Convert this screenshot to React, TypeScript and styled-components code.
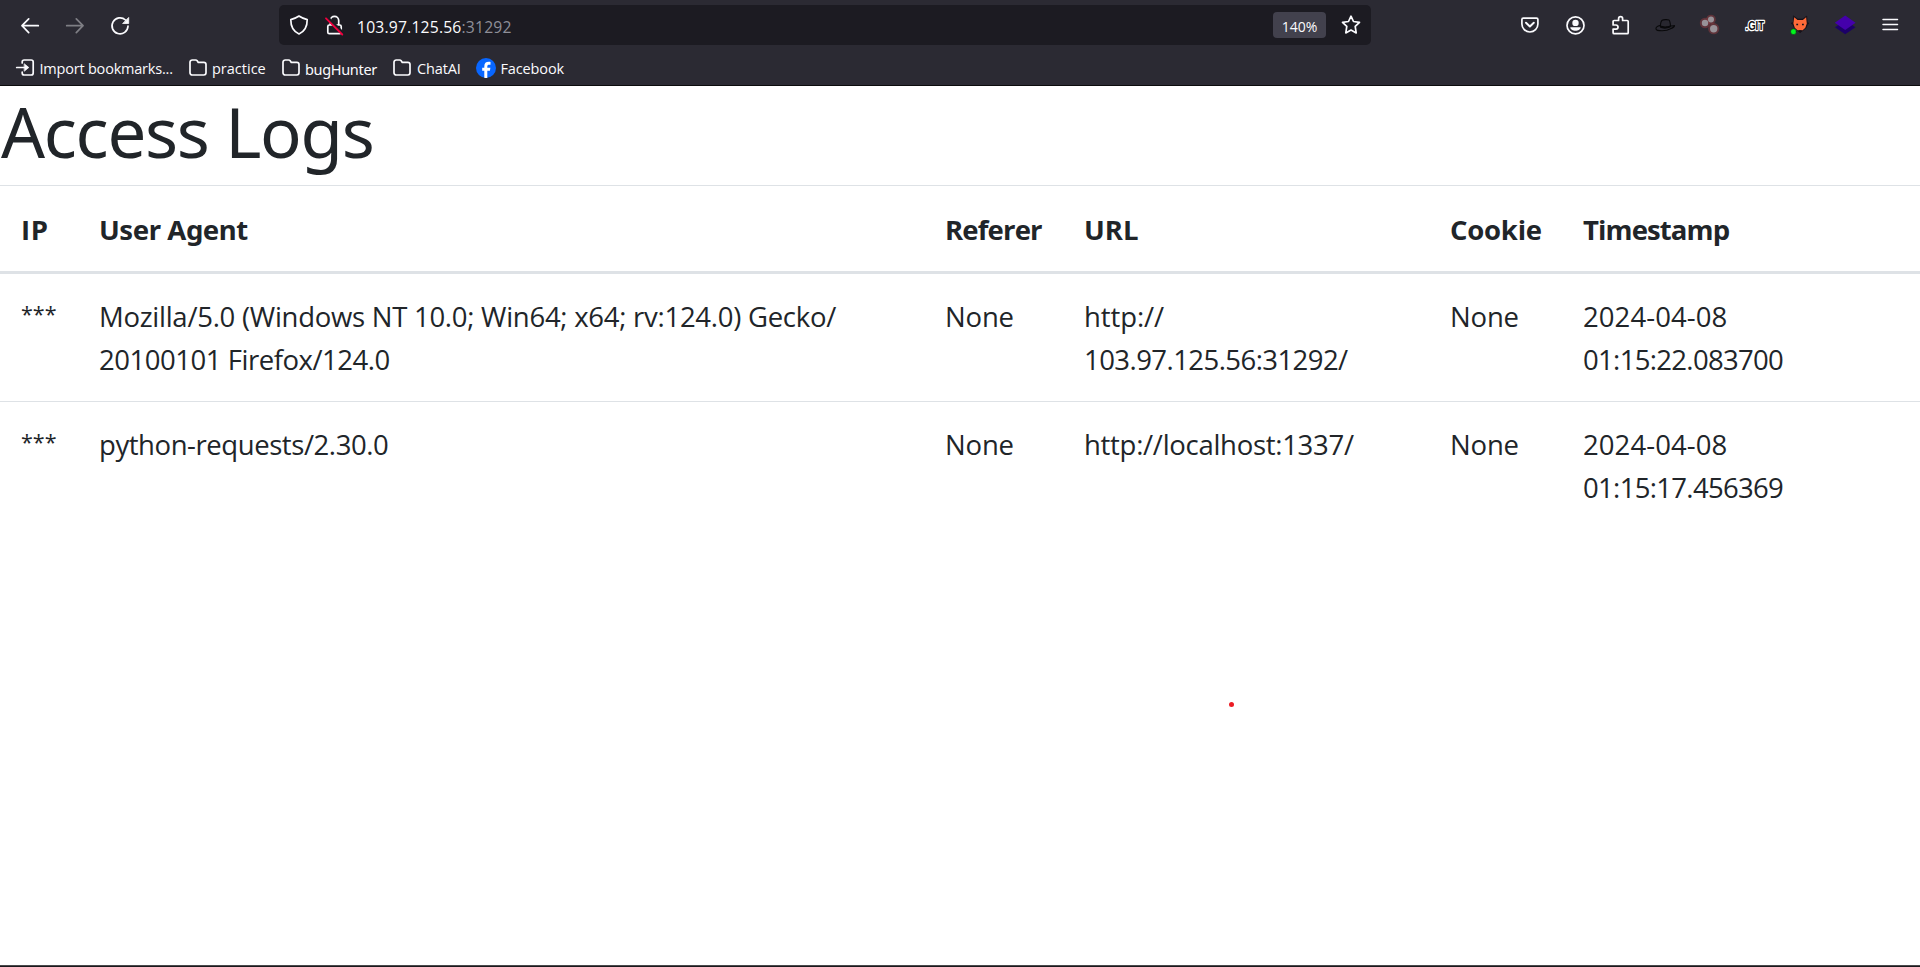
import React from 'react';
import styled, { createGlobalStyle } from 'styled-components';

const GlobalStyle = createGlobalStyle`
  * { box-sizing: border-box; }
  html, body { margin: 0; padding: 0; background: #fff; }
  body {
    font-family: 'Open Sans', 'Noto Sans', sans-serif;
    overflow: hidden;
  }
`;

const roundFont = "'Noto Sans', 'Open Sans', sans-serif";

const Window = styled.div`
  display: flex;
  flex-direction: column;
  width: 100%;
  height: 967px;
`;

const Chrome = styled.header`
  flex: none;
  height: 86px;
  background: #2b2a33;
  border-bottom: 1px solid #0c0c0d;
  color: #fbfbfe;
`;

const NavBar = styled.div`
  display: flex;
  align-items: center;
  height: 50px;
`;

const NavButtons = styled.div`
  display: flex;
  width: 279px;
  padding-left: 7.5px;
`;

const IconButton = styled.span<{ $dim?: boolean }>`
  display: flex;
  justify-content: center;
  width: 45px;
  opacity: ${(p) => (p.$dim ? 0.4 : 1)};
`;

const Glyph = styled.svg`
  display: block;
  flex: none;
  width: 24px;
  height: 24px;
  overflow: visible;
  fill: none;
  stroke: #fbfbfe;
  stroke-width: 1.7;
  stroke-linecap: round;
  stroke-linejoin: round;
`;

const UrlBar = styled.div`
  display: flex;
  align-items: center;
  width: 1092px;
  height: 40px;
  padding: 0 8px;
  border-radius: 5px;
  background: #1c1b22;
`;

const Security = styled.div`
  display: flex;
  gap: 11px;
`;

const Address = styled.div`
  flex: 1;
  margin-left: 11px;
  padding-top: 4px;
  font-size: 15.7px;
  line-height: 24px;
  letter-spacing: 0.19px;
  white-space: nowrap;
`;

const Port = styled.span`
  color: #8f8f98;
`;

const ZoomBadge = styled.span`
  display: flex;
  align-items: center;
  justify-content: center;
  width: 53px;
  height: 26px;
  margin-right: 13px;
  padding-top: 2px;
  border-radius: 4px;
  background: #42414d;
  font-size: 14px;
`;

const Extensions = styled.div`
  display: flex;
  margin-left: auto;
  padding-right: 7.5px;
`;

const GitText = styled.text`
  font: 700 12px 'Liberation Sans', sans-serif;
  fill: #111;
  stroke: #fff;
  stroke-width: 2.6px;
  paint-order: stroke;
`;

const Bookmarks = styled.nav`
  display: flex;
  align-items: center;
  height: 35px;
  padding-left: 15px;
`;

const Bookmark = styled.span<{ $width: number; $gap?: number; $spacing?: number; $round?: boolean }>`
  display: flex;
  align-items: center;
  gap: ${(p) => p.$gap ?? 4}px;
  width: ${(p) => p.$width}px;
  font-family: ${(p) => (p.$round ? roundFont : 'inherit')};
  font-size: 14.5px;
  line-height: 20px;
  letter-spacing: ${(p) => p.$spacing ?? -0.2}px;
  white-space: nowrap;
`;

const BookmarkLabel = styled.span`
  padding-top: 2px;
`;

const BookmarkGlyph = styled(Glyph)`
  width: 20px;
  height: 20px;
`;

const Page = styled.main`
  flex: 1;
  color: #212529;
`;

const Title = styled.h1`
  height: 99px;
  margin: 0;
  padding: 3px 0 0 1px;
  font-family: ${roundFont};
  font-size: 69px;
  font-weight: 400;
  line-height: 84px;
  letter-spacing: -1.3px;
`;

const LogTable = styled.table`
  width: 100%;
  table-layout: fixed;
  border-collapse: separate;
  border-spacing: 0;
  font-size: 27.5px;
  line-height: 43px;
  text-align: left;
`;

const Column = styled.col<{ $width?: number }>`
  width: ${(p) => (p.$width ? `${p.$width}px` : 'auto')};
`;

const HeadCell = styled.th<{ $spacing: number; $round: boolean }>`
  height: 89px;
  padding: 22px 0 20px 21px;
  border-top: 1px solid #dee2e6;
  border-bottom: 3px solid #dee2e6;
  font-family: ${(p) => (p.$round ? roundFont : 'inherit')};
  font-weight: 700;
  letter-spacing: ${(p) => p.$spacing}px;
  white-space: nowrap;
`;

const Cell = styled.td`
  padding: 21px 0 20px 21px;
  vertical-align: top;
  white-space: nowrap;

  tr + tr > & {
    border-top: 1px solid #dee2e6;
  }
`;

const MaskedCell = styled(Cell)`
  padding-top: 18px;
  font-size: 21.5px;
`;

const Line = styled.div<{ $spacing: number }>`
  letter-spacing: ${(p) => p.$spacing}px;
`;

const PointerDot = styled.span`
  position: absolute;
  left: 1229px;
  top: 702px;
  width: 5px;
  height: 5px;
  border-radius: 50%;
  background: #ec1c24;
`;

const BottomEdge = styled.footer`
  flex: none;
  height: 2px;
  border-top: 1px solid #4a4a4c;
  background: #1b191c;
`;

type TextLine = [text: string, spacing: number];

const headings: { text: string; spacing: number; round?: boolean }[] = [
  { text: 'IP', spacing: 0.6 },
  { text: 'User Agent', spacing: -0.43, round: true },
  { text: 'Referer', spacing: -0.82 },
  { text: 'URL', spacing: 0.03 },
  { text: 'Cookie', spacing: -0.25 },
  { text: 'Timestamp', spacing: -0.89 },
];

const none: TextLine[] = [['None', -0.17]];

const logs: { ip: string; cells: TextLine[][] }[] = [
  {
    ip: '***',
    cells: [
      [
        ['Mozilla/5.0 (Windows NT 10.0; Win64; x64; rv:124.0) Gecko/', -0.27],
        ['20100101 Firefox/124.0', -0.47],
      ],
      none,
      [
        ['http://', -0.1],
        ['103.97.125.56:31292/', -0.56],
      ],
      none,
      [
        ['2024-04-08', 0.08],
        ['01:15:22.083700', -0.68],
      ],
    ],
  },
  {
    ip: '***',
    cells: [
      [['python-requests/2.30.0', -0.43]],
      none,
      [['http://localhost:1337/', -0.29]],
      none,
      [
        ['2024-04-08', 0.08],
        ['01:15:17.456369', -0.68],
      ],
    ],
  },
];

const FolderIcon = () => (
  <BookmarkGlyph viewBox="0 0 20 20">
    <path d="M2 4.2a2.2 2.2 0 0 1 2.2-2.2h3.4c.7 0 1.2.3 1.6.8l1.1 1.6h5.5A2.2 2.2 0 0 1 18 6.6v8.2a2.2 2.2 0 0 1-2.2 2.2H4.2A2.2 2.2 0 0 1 2 14.8z" />
  </BookmarkGlyph>
);

export default function App() {
  return (
    <Window>
      <GlobalStyle />
      <Chrome>
        <NavBar>
          <NavButtons>
            <IconButton>
              <Glyph viewBox="0 0 24 24">
                <path d="M20.3 12.7H4M10.700 5.800L4 12.700l6.700 6.900" />
              </Glyph>
            </IconButton>
            <IconButton $dim>
              <Glyph viewBox="0 0 24 24">
                <path d="M3.7 12.7H20M13.300 5.800l6.700 6.900-6.700 6.900" />
              </Glyph>
            </IconButton>
            <IconButton>
              <Glyph viewBox="0 0 24 24">
                <path d="M17.5 7A8 8 0 1 0 20 13.2" />
                <path d="M20.7 4.8v5.700H15z" fill="#fbfbfe" stroke="#fbfbfe" strokeWidth="0.8" />
              </Glyph>
            </IconButton>
          </NavButtons>
          <UrlBar>
            <Security>
              <Glyph viewBox="0 0 24 24">
                <path d="M12 3c2.500 1.700 5.200 2.900 8.200 3.600.1 6-1.700 11.600-8.200 14.400C5.500 18.200 3.700 12.600 3.800 6.600 6.800 5.900 9.500 4.700 12 3z" />
              </Glyph>
              <Glyph viewBox="0 0 24 24">
                <path d="M8.300 11.900V7.500a4.200 4.200 0 0 1 8.400 0v4.400M7.300 12h10.400c.9 0 1.500.6 1.500 1.500v5.700c0 .9-.6 1.500-1.500 1.500H7.300c-.9 0-1.500-.6-1.500-1.500v-5.700c0-.9.6-1.500 1.500-1.500z" />
                <path d="M5.500 4.500l15.500 15.500" stroke="#1c1b22" strokeWidth="3" />
                <path d="M4 5.300l16.300 16.200" stroke="#f0003f" strokeWidth="1.800" />
              </Glyph>
            </Security>
            <Address>
              103.97.125.56<Port>:31292</Port>
            </Address>
            <ZoomBadge>140%</ZoomBadge>
            <Glyph viewBox="0 0 24 24">
              <path d="M12 3.200l2.500 5.300 6 .8-4.300 4.100 1 6.500L12 17.100l-5.200 2.800 1-6.500L3.500 9.300l6-.8z" />
            </Glyph>
          </UrlBar>
          <Extensions>
            <IconButton>
              <Glyph viewBox="0 0 24 24">
                <path d="M5.300 5.100h13.200c.8 0 1.400.6 1.400 1.400V11a8 8 0 0 1-16 0V6.500c0-.8.6-1.400 1.400-1.400z" />
                <path d="M8 9.700l3.900 3.700 3.900-3.700" strokeWidth="2" />
              </Glyph>
            </IconButton>
            <IconButton>
              <Glyph viewBox="0 0 24 24">
                <circle cx="12.5" cy="12.4" r="8.5" />
                <circle cx="12.5" cy="9.9" r="3.2" fill="#fbfbfe" stroke="none" />
                <path d="M7.300 14.200h10.400c0 2-2.500 3.600-5.200 3.600s-5.200-1.600-5.200-3.600z" fill="#fbfbfe" stroke="none" />
              </Glyph>
            </IconButton>
            <IconButton>
              <Glyph viewBox="0 0 24 24">
                <path d="M10.600 7.500V5.700a2 2 0 0 1 4 0v1.800h4.600c.6 0 1 .4 1 1v11.200c0 .6-.4 1-1 1H6.100c-.6 0-1-.4-1-1v-3.600H8a2 2 0 0 0 0-4.100H5.100V8.500c0-.6.4-1 1-1z" />
              </Glyph>
            </IconButton>
            <IconButton>
              <Glyph viewBox="0 0 24 24">
                <path d="M7 12.500C4.500 13 2.500 14.600 3 16c.9 2.600 10.500 2.300 14.500-.2 2.700-1.200 4.300-2 4-3.300-1.400.6-2.300.6-4 .4" fill="#2b2a33" stroke="#09090b" strokeWidth="1.100" />
                <path d="M7.300 13.500c.2-3 .6-5.500 1.900-6.300 1.200-.7 5.600-.8 6.700-.3 1 .6 1.400 3.500 1.700 6.100-2.500 1.700-7.500 2-10.300.5z" fill="#28272f" stroke="#09090b" strokeWidth="1.100" />
                <path d="M7.300 12.300c2.500 1.500 7.700 1.400 10.300-.1l.2 2c-3 1.700-8 2-10.700.4z" fill="#09090b" stroke="none" />
              </Glyph>
            </IconButton>
            <IconButton>
              <Glyph viewBox="0 0 24 24">
                <g fill="none" stroke="#8a3a40" strokeOpacity="0.55" strokeWidth="2.600">
                  <circle cx="13" cy="6.500" r="3.500" />
                  <circle cx="7" cy="10" r="3.900" />
                  <circle cx="15.700" cy="15.700" r="4.300" />
                </g>
                <g fill="#989298" stroke="none">
                  <circle cx="13" cy="6.500" r="3" />
                  <circle cx="7" cy="10" r="3.200" />
                  <circle cx="15.700" cy="15.700" r="3.700" />
                </g>
              </Glyph>
            </IconButton>
            <IconButton>
              <Glyph viewBox="0 0 24 24">
                <GitText x="2.500" y="16.800" textLength="18.500" lengthAdjust="spacingAndGlyphs">
                  .GIT
                </GitText>
              </Glyph>
            </IconButton>
            <IconButton>
              <Glyph viewBox="0 0 24 24">
                <path d="M5.700 3l4 3h5L18.700 3l.6 6.500 1.700.7-1.700 1.500-1 3-6.200 5-6-5L5 11.700l-2-1.500 2.100-.7z" fill="#17121a" stroke="#17121a" strokeWidth="0.700" />
                <path d="M6.200 4.300l3.300 2.700h5.400L18.100 4.300l.7 6.200-1.500 4.300-2.600 2.400H9.600L6.800 14.800 5.400 10.500z" fill="#ff6a38" stroke="none" />
                <path d="M8.300 11.500h1.800M14 11.500h1.800" stroke="#17121a" strokeWidth="1.700" strokeLinecap="butt" />
                <path d="M10.500 17.300h3.400l-1.700 2z" fill="#17121a" stroke="none" />
                <circle cx="5.500" cy="18.700" r="2.900" fill="#00f51d" stroke="#17121a" strokeWidth="0.500" />
              </Glyph>
            </IconButton>
            <IconButton>
              <Glyph viewBox="0 0 24 24">
                <path d="M12.200 7.700l10.300 6.600-10.300 7-10.300-7z" fill="#1c0068" stroke="none" />
                <path d="M12.200 2.500l10.400 7.200-10.400 7.300L1.800 9.700z" fill="#4400ab" stroke="none" />
              </Glyph>
            </IconButton>
            <IconButton>
              <Glyph viewBox="0 0 24 24">
                <path d="M5 6.500h14.500M5 11.500h14.500M5 16.500h14.500" strokeWidth="1.500" />
              </Glyph>
            </IconButton>
          </Extensions>
        </NavBar>
        <Bookmarks>
          <Bookmark $width={173} $gap={4.5} $spacing={-0.21}>
            <BookmarkGlyph viewBox="0 0 20 20">
              <path d="M7.200 5V4c0-1.200.8-2 2-2h7c1.200 0 2 .8 2 2v11c0 1.200-.8 2-2 2h-7c-1.200 0-2-.8-2-2v-1M1.700 9.500h8" />
              <path d="M9.500 6l4.300 3.500L9.500 13z" fill="#fbfbfe" strokeWidth="0.8" />
            </BookmarkGlyph>
            <BookmarkLabel>Import bookmarks...</BookmarkLabel>
          </Bookmark>
          <Bookmark $width={93} $spacing={0}>
            <FolderIcon />
            <BookmarkLabel>practice</BookmarkLabel>
          </Bookmark>
          <Bookmark $width={111} $spacing={-0.33} $round>
            <FolderIcon />
            <BookmarkLabel>bugHunter</BookmarkLabel>
          </Bookmark>
          <Bookmark $width={84} $gap={5} $spacing={-0.11}>
            <FolderIcon />
            <BookmarkLabel>ChatAI</BookmarkLabel>
          </Bookmark>
          <Bookmark $width={100} $gap={4.5} $spacing={-0.13}>
            <BookmarkGlyph viewBox="0 0 20 20">
              <circle cx="10" cy="10" r="10" fill="#0866ff" stroke="none" />
              <path d="M8.300 19.800v-7H6.200V9.800h2.100V8.500c0-3.300 1.500-4.700 4.500-4.700.6 0 1.300.1 1.700.2v2.700h-1.300c-1.400 0-1.900.6-1.900 1.900v1.200h3.100l-.5 3h-2.600v7.100c-1 .1-2 .1-3-.1z" fill="#fff" stroke="none" />
            </BookmarkGlyph>
            <BookmarkLabel>Facebook</BookmarkLabel>
          </Bookmark>
        </Bookmarks>
      </Chrome>
      <Page>
        <Title>Access Logs</Title>
        <LogTable>
          <colgroup>
            <Column $width={78} />
            <Column $width={846} />
            <Column $width={139} />
            <Column $width={366} />
            <Column $width={133} />
            <Column />
          </colgroup>
          <thead>
            <tr>
              {headings.map(({ text, spacing, round = false }) => (
                <HeadCell key={text} $spacing={spacing} $round={round}>
                  {text}
                </HeadCell>
              ))}
            </tr>
          </thead>
          <tbody>
            {logs.map((log, row) => (
              <tr key={row}>
                <MaskedCell>{log.ip}</MaskedCell>
                {log.cells.map((lines, column) => (
                  <Cell key={column}>
                    {lines.map(([text, spacing]) => (
                      <Line key={text} $spacing={spacing}>
                        {text}
                      </Line>
                    ))}
                  </Cell>
                ))}
              </tr>
            ))}
          </tbody>
        </LogTable>
        <PointerDot />
      </Page>
      <BottomEdge />
    </Window>
  );
}
